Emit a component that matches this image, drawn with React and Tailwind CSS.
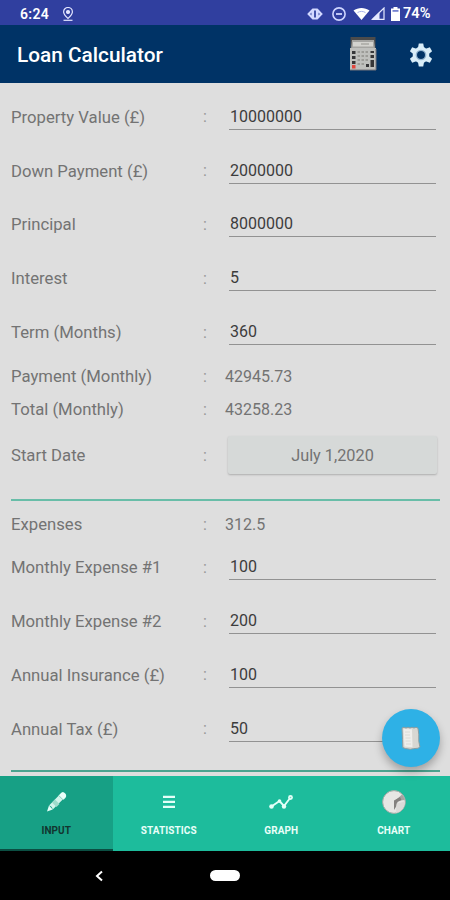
import React from "react";

const loanFields = [
  { label: "Property Value (£)", value: "10000000" },
  { label: "Down Payment (£)", value: "2000000" },
  { label: "Principal", value: "8000000" },
  { label: "Interest", value: "5" },
  { label: "Term (Months)", value: "360" },
];

const expenseFields = [
  { label: "Monthly Expense #1", value: "100" },
  { label: "Monthly Expense #2", value: "200" },
  { label: "Annual Insurance (£)", value: "100" },
  { label: "Annual Tax (£)", value: "50" },
];

function Label({ children }) {
  return (
    <>
      <span className="w-[192px] shrink-0 pt-px text-[16.7px]">{children}</span>
      <span className="w-[22px] shrink-0 pt-px text-[#989898]">:</span>
    </>
  );
}

function InputRow({ label, value }) {
  return (
    <div className="flex h-[53.8px] items-center">
      <Label>{label}</Label>
      <div className="ml-[4px] mr-[4px] h-[26px] flex-1 border-b border-[#929292] pl-px leading-[26px] text-[#3c3c3c]">{value}</div>
    </div>
  );
}

function ValueRow({ label, value }) {
  return (
    <div className="flex h-[33px] items-center">
      <Label>{label}</Label>
      <span className="pt-px">{value}</span>
    </div>
  );
}

function StatusBar() {
  return (
    <div className="flex h-[25px] shrink-0 items-center bg-[#303f9f] pt-[2px] pl-[20px] pr-[18px] text-white">
      <span className="w-[30px] text-[14px] leading-none font-semibold tracking-[0.3px]">6:24</span>
      <svg className="ml-[12px] h-[14px] w-[12px]" viewBox="0 0 12 14" fill="none" stroke="#e3e6ff" strokeWidth="1.2">
        <path d="M6 11.5C3.5 9 1.6 7.2 1.6 4.9a4.4 4.4 0 0 1 8.8 0C10.4 7.2 8.5 9 6 11.5Z" />
        <circle cx="6" cy="5" r="1.5" fill="#e3e6ff" />
        <path d="M1.5 13.3h9" />
      </svg>
      <div className="ml-auto flex items-center">
        <svg className="h-[12px] w-[16px]" viewBox="0 0 16 12">
          <path d="M4.500 1.500 5.500.5h5l1 1L15.800 6l-4.300 4.500-1 1h-5l-1-1L.2 6Z" fill="#d3d9ff" />
          <path d="M7 2.500h2v7H7ZM4.500 4.500v3L3 6ZM11.500 4.500v3L13 6Z" fill="#4352aa" />
        </svg>
        <svg className="ml-[9px] h-[14px] w-[14px]" viewBox="0 0 14 14" fill="none" stroke="#cfd6ff" strokeWidth="1.6">
          <circle cx="7" cy="7" r="6.1" />
          <path d="M4 7h6" strokeWidth="1.8" />
        </svg>
        <svg className="ml-[7px] h-[13px] w-[17px]" viewBox="0 0 17 13">
          <path d="M0.5 3.5C5 0 12 0 16.5 3.5L8.5 13Z" fill="#fff" />
          <path d="M4.5 5.6c2.3-1.6 5.7-1.6 8 0" fill="none" stroke="#a9b3ec" strokeWidth="1" />
        </svg>
        <svg className="ml-px h-[13px] w-[14px]" viewBox="0 0 14 13">
          <path d="M1.5 12.3 13 1v11.3Z" fill="none" stroke="#e5e9ff" strokeWidth="1.2" />
          <path d="M1 12.5 8.5 5v7.5Z" fill="#e5e9ff" />
        </svg>
        <svg className="ml-[6px] h-[14px] w-[9px]" viewBox="0 0 9 14">
          <path d="M2.5 0h4v1.5H9V14H0V1.5h2.5Z" fill="#fff" />
          <path d="M1.5 3h6v1.8h-6Z" fill="#7683d0" />
        </svg>
        <span className="ml-[3px] w-[29px] text-[14.6px] leading-none font-semibold">74%</span>
      </div>
    </div>
  );
}

function CalculatorIcon() {
  return (
    <svg className="h-[34px] w-[28px]" viewBox="0 0 28 34">
      <path d="M1.5 0h25v12h-25Z" fill="#4b4b4b" />
      <path d="M3 3h22l1 9H2Z" fill="#a5a5a2" />
      <path d="M4 5h20v4.5H4Z" fill="#d3d3cf" />
      <path d="M12 7h8" stroke="#a8a8a3" strokeWidth="1.5" />
      <path d="M1 11h26v22H1Z" fill="#bfc0bd" />
      <path d="M1 33h26V12" fill="none" stroke="#74757a" strokeWidth="1" />
      <path d="M3 14h3.5v3H3zM3 19h3.5v3H3zM3 24h3.5v3H3zM21.5 14H25v2h-3.5zM21.5 18H25v3h-3.5zM21.5 23H25v7h-3.5zM17 27h3v3h-3z" fill="#363638" />
      <path d="M3 28h3.5v3.5H3z" fill="#e2463d" />
      <path d="M8.5 15h11M8.5 19h11M8.5 23h11M8.5 27h7" stroke="#9c9c98" strokeWidth="2" strokeDasharray="2.5 1.5" />
    </svg>
  );
}

function GearIcon() {
  return (
    <svg className="mt-px h-[24px] w-[24px]" viewBox="0 0 24 24">
      <g fill="#d9edf8">
        <path d="m9.8 0.5h4.4l1 5h-6.4Z" />
        <path d="m9.8 0.5h4.4l1 5h-6.4Z" transform="rotate(60 12 12)" />
        <path d="m9.8 0.5h4.4l1 5h-6.4Z" transform="rotate(120 12 12)" />
        <path d="m9.8 0.5h4.4l1 5h-6.4Z" transform="rotate(180 12 12)" />
        <path d="m9.8 0.5h4.4l1 5h-6.4Z" transform="rotate(240 12 12)" />
        <path d="m9.8 0.5h4.4l1 5h-6.4Z" transform="rotate(300 12 12)" />
        <circle cx="12" cy="12" r="8.3" />
      </g>
      <circle cx="12" cy="12" r="4.7" fill="none" stroke="#91b4d1" strokeWidth="1.3" />
      <circle cx="12" cy="12" r="4" fill="#003366" />
    </svg>
  );
}

function PencilIcon() {
  return (
    <svg className="ml-px h-[22px] w-[22px]" viewBox="0 0 22 22">
      <path d="M1 20.500 3 14.500 6.700 18.500Z" fill="#e7fff9" />
      <path d="M3 14.500 15.500 1.800q1.500-1.300 3 0l1 1q1.300 1.500 0 3L6.700 18.500Q6 15 3 14.500Z" fill="#d2f4eb" />
      <path d="m9 8.500 4.500 4.500-3 3L6 11.500Z" fill="#9fdccb" />
      <path d="m13 4.300 4.500 4.500 2-2q1.500-1.800 0-3.500l-1.300-1.300q-1.500-1.300-3 0Z" fill="#eafff9" />
      <path d="m12.700 4.500 4.500 4.500" stroke="#8dd3c1" strokeWidth="1" />
    </svg>
  );
}

function ListIcon() {
  return (
    <svg className="h-[22px] w-[22px]" viewBox="0 0 22 22" stroke="#e4fff8" strokeWidth="2.2">
      <path d="M5 5.8h12M5 10.8h12M5 15.8h12" />
    </svg>
  );
}

function GraphIcon() {
  return (
    <svg className="h-[22px] w-[26px]" viewBox="0 0 26 22" fill="#e4fff8">
      <path d="m3.5 15.5 8-5.500 4.500 5 6.500-8.500" fill="none" stroke="#e4fff8" strokeWidth="1.9" />
      <circle cx="3.5" cy="15.5" r="2.3" />
      <circle cx="11.5" cy="10" r="1.8" />
      <circle cx="16" cy="15.500" r="2.2" />
      <circle cx="22.5" cy="6.500" r="2.4" />
      <circle cx="22.5" cy="6.500" r="0.8" fill="#76d6bf" />
    </svg>
  );
}

function PieIcon() {
  return (
    <svg className="h-[24px] w-[24px]" viewBox="0 0 24 24">
      <circle cx="12" cy="12" r="11.4" fill="#e6e6e4" stroke="#9fa8a3" strokeWidth="1" />
      <path d="M13 11 20 4.500A11 11 0 0 1 22.800 10Z" fill="#a5a4a2" />
      <path d="m12 10.500 6-3.500 1.500 3-4 2-1 4-2.500 4Z" fill="#83817f" />
      <path d="M14.500 13.500 23 11.500A11 11 0 0 1 14 23Z" fill="#dbdad8" />
    </svg>
  );
}

const tabs = [
  { name: "INPUT", icon: PencilIcon, active: true },
  { name: "STATISTICS", icon: ListIcon },
  { name: "GRAPH", icon: GraphIcon },
  { name: "CHART", icon: PieIcon },
];

function TabBar() {
  return (
    <nav className="grid h-[75px] shrink-0 grid-cols-4 bg-[#1dbc9c]">
      {tabs.map(({ name, icon: Icon, active }) => (
        <div
          key={name}
          className={
            active
              ? "flex flex-col items-center border-b-2 border-[#0b4f43] bg-[#17a085] pt-[14px] text-[#12352f]"
              : "flex flex-col items-center pt-[14px] text-[#e9fff9]"
          }
        >
          <div className="flex h-[24px] items-center">
            <Icon />
          </div>
          <span className="mt-[10px] text-[10px] leading-[13px] font-bold tracking-[0.1px]">{name}</span>
        </div>
      ))}
    </nav>
  );
}

export default function App() {
  return (
    <div className="relative flex h-[900px] w-[450px] flex-col overflow-hidden bg-[#dedede] font-['Roboto',sans-serif]">
      <StatusBar />
      <header className="flex h-[58px] shrink-0 items-center bg-[#003366] pl-[17px] pr-[17px]">
        <h1 className="flex-1 pt-[3px] text-[20.8px] font-medium text-white">Loan Calculator</h1>
        <CalculatorIcon />
        <div className="ml-[32px]">
          <GearIcon />
        </div>
      </header>

      <main className="flex-1 overflow-hidden pt-[7px] pl-[11px] pr-[10px] text-[16px] text-[#737373]">
        {loanFields.map((f) => (
          <InputRow key={f.label} label={f.label} value={f.value} />
        ))}
        <div className="mt-px">
          <ValueRow label="Payment (Monthly)" value="42945.73" />
          <ValueRow label="Total (Monthly)" value="43258.23" />
        </div>
        <div className="flex h-[59px] items-center">
          <Label>Start Date</Label>
          <button className="ml-[3px] mr-[3px] h-[38px] flex-1 rounded-[2px] bg-[#d6d9d8] pt-px text-[16.3px] shadow-[0_1px_2px_rgba(0,0,0,0.22)]">July 1,2020</button>
        </div>
        <div className="mt-[14px] h-[2px] bg-[#68bda8]" />
        <div className="mt-[7px] -mb-[0.6px]">
          <ValueRow label="Expenses" value="312.5" />
        </div>
        {expenseFields.map((f) => (
          <InputRow key={f.label} label={f.label} value={f.value} />
        ))}
        <div className="mt-[14.6px] h-[2px] bg-[#4ba38f]" />
      </main>

      <TabBar />
      <div className="grid h-[49px] shrink-0 grid-cols-[198px_54px_198px] items-center bg-black">
        <svg className="ml-[95px] h-[12px] w-[9px]" viewBox="0 0 9 12" fill="none" stroke="#fff" strokeWidth="2">
          <path d="M7 1.5 2 6l5 4.5" />
        </svg>
        <div className="mx-auto h-[11px] w-[30px] rounded-full bg-white" />
      </div>

      <button className="absolute top-[709px] left-[382px] flex h-[58px] w-[58px] items-center justify-center rounded-full bg-[#2eb1e6] shadow-[0_5px_8px_rgba(0,0,0,0.28)]">
        <svg className="h-[24px] w-[22px]" viewBox="0 0 22 24">
          <path d="m2 2 2-.8 2 .8 2-.8 2 .8 2-.8 2 .8 2-.8 2 1 .8 6v7l1 5.500-1.500 1.500-5 .5-3 .6-5-.8-2.500-1-.3-8Z" fill="#d8d7d2" stroke="#8a9da1" strokeWidth="1" />
          <path d="m3.500 3 8.500.3.500 18-8-.8Z" fill="#efeeeb" />
          <path d="M5 6h5M5 9h5M5.500 12h5M5.500 15h5M6 18h5M15 5l.5 14" stroke="#d9d8d4" strokeWidth="0.9" />
        </svg>
      </button>
    </div>
  );
}
